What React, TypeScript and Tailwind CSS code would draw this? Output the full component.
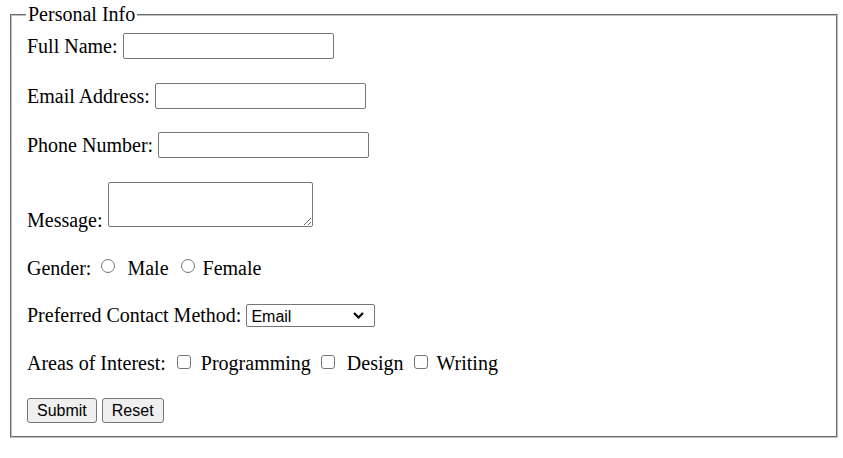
import React from 'react';

const serif = "font-['Liberation_Serif','Times_New_Roman',serif] text-[20px] leading-[23px] text-black";
const sans = "font-['Liberation_Sans',Arial,sans-serif] text-[16px] text-black";
const field = 'h-[26px] w-[211px] rounded-[2px] border border-[#767676] bg-white px-[3px] outline-none';
const radio = 'mb-[5px] size-[14px] shrink-0 appearance-none rounded-full border border-[#767676] bg-white';
const check = 'mb-[3px] size-[14px] shrink-0 appearance-none rounded-[3px] border border-[#767676] bg-white';

const App: React.FC = () => {
  return (
    <div className={`min-h-screen bg-white pt-[3px] pl-[10px] ${serif}`}>
      <fieldset className="w-[828px] border-2 [border-style:groove] border-[#c0c0c0] pl-[15px] pr-[15px] pb-[13px]">
        <legend className="-ml-[1px] px-[2px] leading-[23px]">Personal Info</legend>

        <div className="flex flex-col pt-[7px]">
          {/* Text fields */}
          <div className="flex h-[26px] items-center gap-[5px]">
            <label htmlFor="name">Full Name:</label>
            <input id="name" type="text" className={field} />
          </div>
          <div className="mt-[24px] flex h-[26px] items-center gap-[5px]">
            <label htmlFor="email">Email Address:</label>
            <input id="email" type="email" className={field} />
          </div>
          <div className="mt-[23px] flex h-[26px] items-center gap-[5px]">
            <label htmlFor="phone">Phone Number:</label>
            <input id="phone" type="tel" className={field} />
          </div>
          <div className="mt-[24px] flex h-[45px] items-end gap-[5px]">
            <label htmlFor="message" className="-mb-[5px]">Message:</label>
            <textarea
              id="message"
              className="h-[45px] w-[205px] rounded-[2px] border border-[#767676] bg-white outline-none"
            />
          </div>

          {/* Gender */}
          <div className="mt-[30px] flex h-[23px] items-center">
            <span>Gender:</span>
            <input type="radio" name="gender" id="male" className={`ml-[10px] ${radio}`} />
            <label htmlFor="male" className="ml-[12px]">Male</label>
            <input type="radio" name="gender" id="female" className={`ml-[12px] ${radio}`} />
            <label htmlFor="female" className="ml-[8px]">Female</label>
          </div>

          {/* Contact method */}
          <div className="mt-[24px] flex h-[23px] items-center gap-[5px]">
            <label htmlFor="contact">Preferred Contact Method:</label>
            <div className="relative">
              <select
                id="contact"
                className={`h-[23px] w-[129px] appearance-none rounded-[2px] border border-[#767676] bg-white pl-[4px] outline-none ${sans}`}
              >
                <option>Email</option>
                <option>Phone</option>
              </select>
              <svg
                className="pointer-events-none absolute right-[11px] top-[8px] h-[7px] w-[11px]"
                viewBox="0 0 11 7"
                fill="none"
                stroke="#000"
                strokeWidth="2.2"
              >
                <polyline points="1,1 5.5,5.5 10,1" />
              </svg>
            </div>
          </div>

          {/* Interests */}
          <div className="mt-[25px] flex h-[23px] items-center">
            <span>Areas of Interest:</span>
            <input type="checkbox" id="prog" className={`ml-[11px] ${check}`} />
            <label htmlFor="prog" className="ml-[10px]">Programming</label>
            <input type="checkbox" id="design" className={`ml-[10px] ${check}`} />
            <label htmlFor="design" className="ml-[12px]">Design</label>
            <input type="checkbox" id="writing" className={`ml-[10px] ${check}`} />
            <label htmlFor="writing" className="ml-[9px]">Writing</label>
          </div>

          {/* Actions */}
          <div className="mt-[23px] flex gap-[5px]">
            <button className={`h-[25px] rounded-[3px] border border-[#767676] bg-[#efefef] px-[9px] ${sans}`}>Submit</button>
            <button className={`h-[25px] rounded-[3px] border border-[#767676] bg-[#efefef] px-[9px] ${sans}`}>Reset</button>
          </div>
        </div>
      </fieldset>
    </div>
  );
};

export default App;
